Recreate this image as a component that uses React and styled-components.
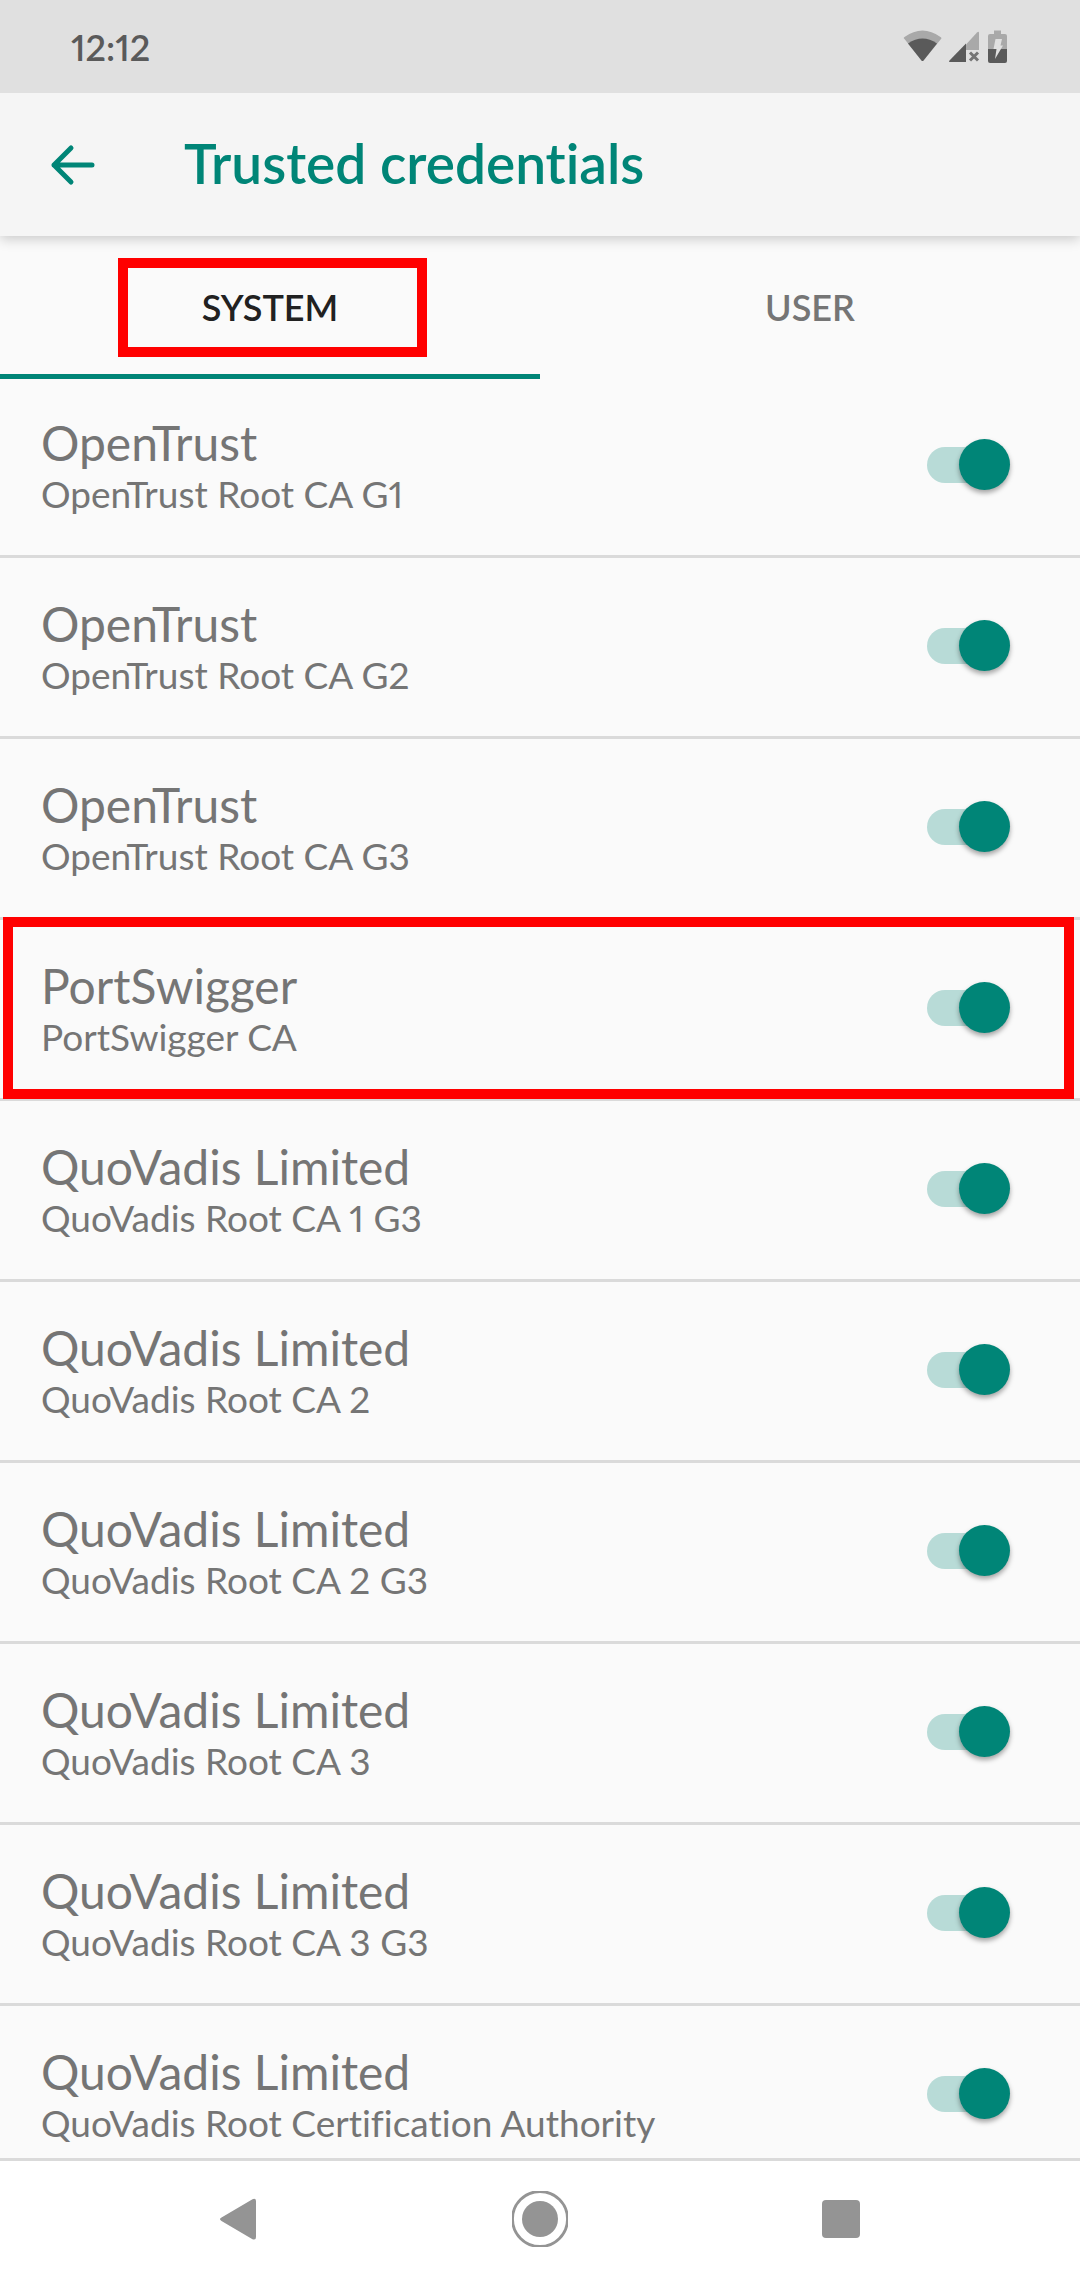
import React, { useState } from "react";
import styled, { createGlobalStyle } from "styled-components";

const GlobalStyle = createGlobalStyle`
  * { box-sizing: border-box; }
  body {
    margin: 0;
    background: #fafafa;
    font-family: Lato, "Open Sans", sans-serif;
    font-variant-ligatures: none;
    font-variant-numeric: proportional-nums;
  }
  button, input { font: inherit; margin: 0; }
`;

const Screen = styled.div`
  display: flex;
  flex-direction: column;
  height: 100vh;
  background: #fafafa;
`;

const StatusBar = styled.div`
  display: flex;
  align-items: center;
  justify-content: space-between;
  flex: none;
  position: relative;
  z-index: 3;
  height: 93px;
  padding: 0 73px 0 71px;
  background: #e0e0e0;
  color: #5a5a5a;
  font-size: 36px;
  line-height: 44px;
  font-weight: 600;
`;

const StatusIcons = styled.div`
  display: flex;
  align-items: center;
  gap: 7px;
  svg { display: block; }
`;

const AppBar = styled.header`
  display: flex;
  align-items: center;
  flex: none;
  gap: 88px;
  height: 143px;
  padding: 0 48px;
  background: #f5f5f5;
  color: #008577;
  box-shadow: 0 3px 12px rgba(0, 0, 0, 0.2);
  position: relative;
  z-index: 2;
`;

const IconButton = styled.button`
  display: flex;
  align-items: center;
  justify-content: center;
  padding: 0;
  border: 0;
  background: none;
  color: inherit;
  svg { display: block; }
`;

const Title = styled.h1`
  margin: 0;
  padding-bottom: 4px;
  font-size: 55px;
  line-height: 64px;
  font-weight: 600;
`;

const Tabs = styled.div`
  display: grid;
  grid-template-columns: 1fr 1fr;
  flex: none;
  position: relative;
  z-index: 1;
  height: 141px;
`;

const Tab = styled.button`
  position: relative;
  padding: 0;
  border: 0;
  background: none;
  color: ${(p) => (p.$active ? "#212121" : "#757575")};
  font-size: 36px;
  line-height: 44px;
  font-weight: 600;

  &::after {
    content: "";
    display: ${(p) => (p.$active ? "block" : "none")};
    position: absolute;
    left: 0;
    right: 0;
    bottom: -2px;
    height: 5px;
    background: #008577;
  }
`;

const Highlight = styled.span`
  position: absolute;
  inset: ${(p) => p.$inset};
  border: 10px solid #ff0000;
  pointer-events: none;
`;

const List = styled.ul`
  flex: 1;
  min-height: 0;
  margin: 0;
  padding: 0;
  list-style: none;
  overflow-y: auto;
  scrollbar-width: none;
`;

const Row = styled.li`
  position: relative;
  border-bottom: 3px solid #dadada;
`;

const RowLabel = styled.label`
  display: flex;
  align-items: center;
  justify-content: space-between;
  height: 178px;
  padding: 0 70px 0 41px;
  color: #757575;
`;

const RowText = styled.span`
  display: flex;
  flex-direction: column;
  gap: 2px;
`;

const Name = styled.span`
  font-size: 48px;
  line-height: 54px;
`;

const Detail = styled.span`
  font-size: 37px;
  line-height: 44px;
`;

const Switch = styled.input`
  appearance: none;
  position: relative;
  flex: none;
  width: 83px;
  height: 54px;

  &::before {
    content: "";
    position: absolute;
    inset: 8px 4px 10px 0;
    border-radius: 18px;
    background: ${(p) => (p.checked ? "#b8dbd7" : "#b9b9b9")};
  }

  &::after {
    content: "";
    position: absolute;
    top: 0;
    left: ${(p) => (p.checked ? "32px" : "0")};
    width: 51px;
    height: 51px;
    border-radius: 50%;
    background: ${(p) => (p.checked ? "#008577" : "#f1f1f1")};
    box-shadow: 0 3px 5px rgba(0, 0, 0, 0.35);
  }
`;

const NavBar = styled.nav`
  display: grid;
  grid-template-columns: repeat(3, 1fr);
  align-items: center;
  flex: none;
  height: 122px;
  padding: 0 8% 3px;
  border-top: 3px solid #dadada;
  background: #ffffff;
  color: #949494;
`;

const WifiIcon = () => (
  <svg width="39" height="34" viewBox="0 0 39 34" aria-hidden="true">
    <path d="M1.500 9Q0 8 1.500 7Q19.500 -6 37.500 7Q39 8 38 9L20.500 30.500Q19.500 31.500 18.500 30.500Z" fill="#a9a9a9" />
    <path d="M5 13.500Q19.500 3.500 34 13.500L20.500 30.500Q19.500 31.500 18.500 30.500Z" fill="#5a5a5a" />
  </svg>
);

const SignalIcon = () => (
  <svg width="32" height="34" viewBox="0 0 32 34" aria-hidden="true">
    <path d="M17 14.500L28 2.500Q30 1 30 3V20H17Z" fill="#a9a9a9" />
    <path d="M17 13.500V32H1Q-0.500 32 0.500 30.500Z" fill="#5a5a5a" />
    <path d="M21 22.500L29 30.500M29 22.500L21 30.500" stroke="#757575" strokeWidth="3" />
  </svg>
);

const BatteryIcon = () => (
  <svg width="19" height="34" viewBox="0 0 19 34" aria-hidden="true">
    <path d="M6 0.500H13V4H17Q19 4 19 6V20H0V6Q0 4 2 4H6Z" fill="#a9a9a9" />
    <path d="M0 19H19V31Q19 33 17 33H2Q0 33 0 31Z" fill="#5a5a5a" />
    <path d="M7.500 9H14L12.500 15.500H15L7 29L8.500 19H5.500Z" fill="#e0e0e0" />
  </svg>
);

const ArrowIcon = () => (
  <svg width="48" height="48" viewBox="0 0 48 48" fill="none" stroke="currentColor" strokeWidth="5" strokeLinecap="round" strokeLinejoin="round" aria-hidden="true">
    <path d="M44 24H6M23 7L6 24L23 41" />
  </svg>
);

const BackIcon = () => (
  <svg width="56" height="56" viewBox="0 0 56 56" fill="currentColor" aria-hidden="true">
    <path d="M11.500 26.500L42.500 8.200Q46 7 46 10V46Q46 49.500 42.500 48.200L11.500 30Q8.500 28 11.500 26.500Z" />
  </svg>
);

const HomeIcon = () => (
  <svg width="56" height="56" viewBox="0 0 56 56" aria-hidden="true">
    <circle cx="28" cy="28" r="27.500" fill="none" stroke="currentColor" strokeWidth="2.800" />
    <circle cx="28" cy="28" r="18" fill="currentColor" />
  </svg>
);

const RecentsIcon = () => (
  <svg width="56" height="56" viewBox="0 0 56 56" fill="currentColor" aria-hidden="true">
    <rect x="8" y="9" width="38" height="38" rx="4" />
  </svg>
);

const credentials = [
  ["OpenTrust", "OpenTrust Root CA G1"],
  ["OpenTrust", "OpenTrust Root CA G2"],
  ["OpenTrust", "OpenTrust Root CA G3"],
  ["PortSwigger", "PortSwigger CA"],
  ["QuoVadis Limited", "QuoVadis Root CA 1 G3"],
  ["QuoVadis Limited", "QuoVadis Root CA 2"],
  ["QuoVadis Limited", "QuoVadis Root CA 2 G3"],
  ["QuoVadis Limited", "QuoVadis Root CA 3"],
  ["QuoVadis Limited", "QuoVadis Root CA 3 G3"],
  ["QuoVadis Limited", "QuoVadis Root Certification Authority"],
];

function Credential({ name, detail }) {
  const [enabled, setEnabled] = useState(true);
  return (
    <Row>
      <RowLabel>
        <RowText>
          <Name>{name}</Name>
          <Detail>{detail}</Detail>
        </RowText>
        <Switch
          type="checkbox"
          role="switch"
          checked={enabled}
          onChange={(e) => setEnabled(e.target.checked)}
        />
      </RowLabel>
      {name === "PortSwigger" && <Highlight $inset="-3px 6px -1px 3px" />}
    </Row>
  );
}

export default function App() {
  return (
    <>
      <GlobalStyle />
      <Screen>
        <StatusBar>
          <span>12:12</span>
          <StatusIcons>
            <WifiIcon />
            <SignalIcon />
            <BatteryIcon />
          </StatusIcons>
        </StatusBar>
        <AppBar>
          <IconButton aria-label="Back">
            <ArrowIcon />
          </IconButton>
          <Title>Trusted credentials</Title>
        </AppBar>
        <Tabs role="tablist">
          <Tab role="tab" aria-selected="true" $active>
            SYSTEM
            <Highlight $inset="22px 113px 20px 118px" />
          </Tab>
          <Tab role="tab" aria-selected="false">USER</Tab>
        </Tabs>
        <List>
          {credentials.map(([name, detail]) => (
            <Credential key={detail} name={name} detail={detail} />
          ))}
        </List>
        <NavBar>
          <IconButton aria-label="Back"><BackIcon /></IconButton>
          <IconButton aria-label="Home"><HomeIcon /></IconButton>
          <IconButton aria-label="Recent apps"><RecentsIcon /></IconButton>
        </NavBar>
      </Screen>
    </>
  );
}
